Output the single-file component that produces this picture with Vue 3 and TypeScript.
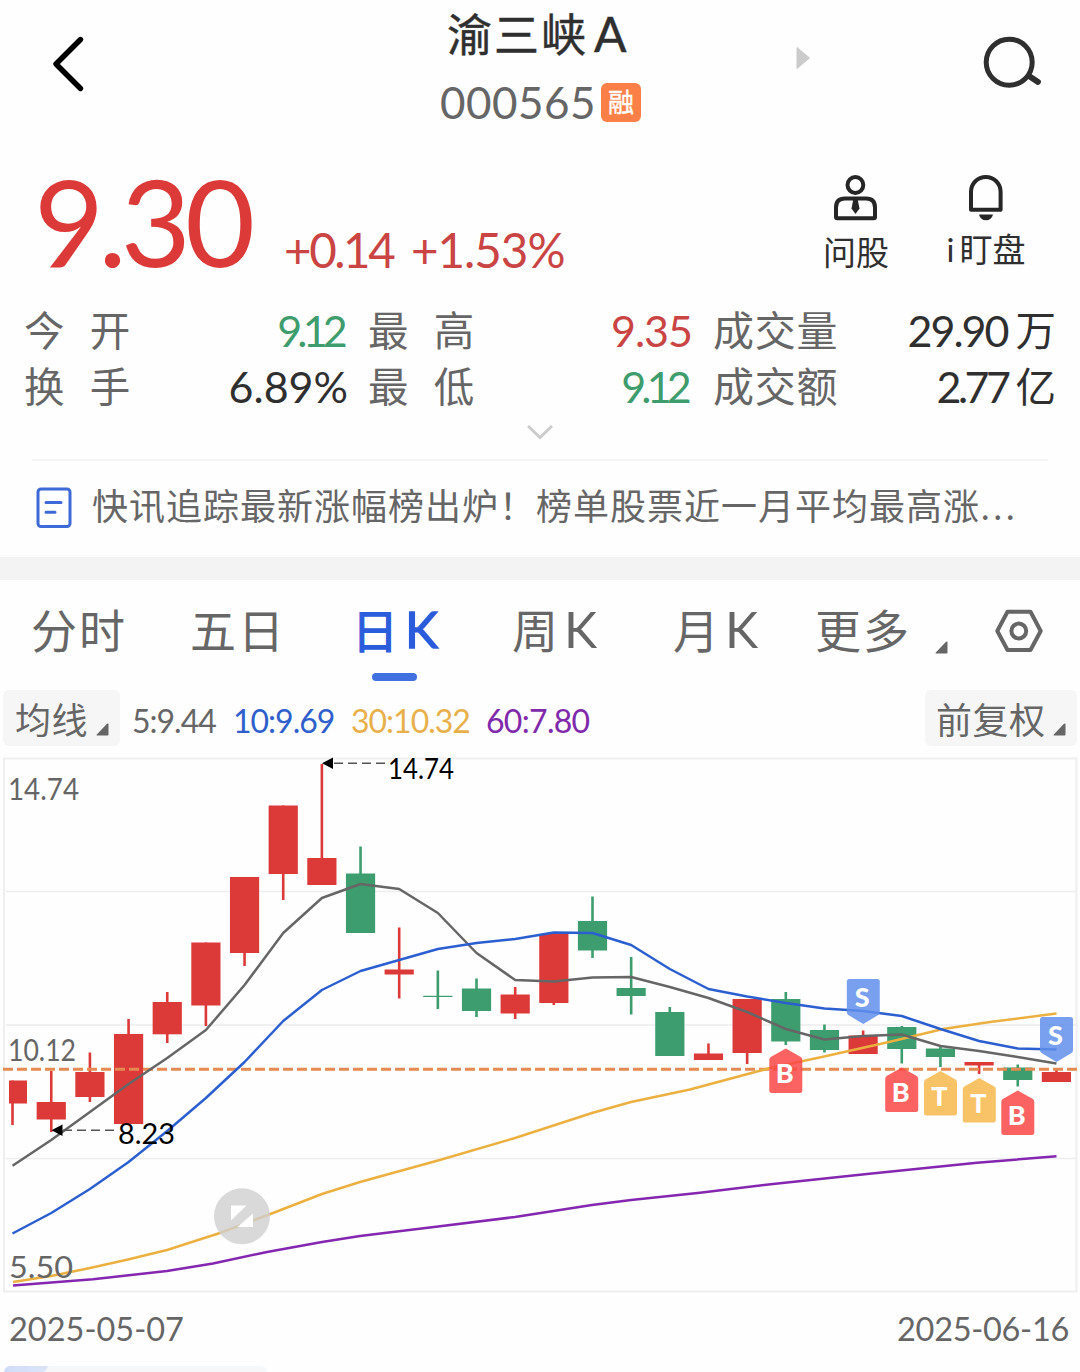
<script setup lang="ts">
type Candle = [up: boolean, high: number, top: number, bottom: number, low: number]
type Point = [number, number]

interface Marker {
  kind: 'B' | 'S' | 'T'
  x: number
  y: number
}

const candles: Candle[] = [
  [true, 1080.5, 1080.5, 1103.5, 1125],
  [true, 1071, 1102, 1119.5, 1132],
  [true, 1052.5, 1072, 1097, 1102],
  [true, 1019, 1034, 1124, 1124],
  [true, 992, 1002, 1034.3, 1043],
  [true, 942.5, 942.5, 1005.5, 1026],
  [true, 877, 877, 953, 966],
  [true, 805.5, 805.5, 874, 900],
  [true, 764, 858, 885, 885],
  [false, 846.5, 873.5, 933, 933],
  [true, 927.5, 969.5, 974.5, 998.5],
  [false, 970.5, 995.8, 997, 1009],
  [false, 978.5, 988.5, 1011, 1017],
  [true, 987, 994.5, 1013.5, 1019],
  [true, 934, 934, 1003, 1005],
  [false, 896.5, 921, 950.5, 958],
  [false, 957, 988, 996, 1014.5],
  [false, 1007, 1012, 1056, 1056],
  [true, 1043.5, 1053.5, 1060, 1060],
  [true, 999, 999, 1053, 1064],
  [false, 992, 999, 1041.5, 1045],
  [false, 1024.5, 1030, 1050, 1052.5],
  [true, 1030.5, 1035.5, 1054, 1054],
  [false, 1026, 1027, 1049, 1063.5],
  [false, 1046, 1048.5, 1057, 1067],
  [true, 1062, 1062, 1065.5, 1074],
  [false, 1064.5, 1067.5, 1080, 1086.5],
  [true, 1069, 1072, 1082, 1082],
]

const STEP = 38.66
const cx = (i: number): number => (i === 0 ? 12.5 : 12.6 + i * STEP)

const bodyLeft = (i: number): number => (i === 0 ? 9 : cx(i) - 14.6)
const bodyWidth = (i: number): number => (i === 0 ? 18 : 29.2)

const ma5 = [
  1165.7, 1140, 1112, 1084, 1058, 1030, 985, 933, 898, 884, 889, 913, 953, 980, 981.5, 977.5, 977, 987, 998, 1012,
  1029, 1039.5, 1036, 1034.5, 1046, 1051, 1057, 1063.5,
].map((y, i): Point => [cx(i), y])

const ma10 = [
  1233.5, 1213, 1189, 1162, 1131, 1098, 1062, 1021, 990, 971, 960, 949, 943, 939, 932.5, 933, 945, 969, 989, 996.5,
  1003, 1008.5, 1011, 1016, 1029, 1041, 1048.5, 1049.5,
].map((y, i): Point => [cx(i), y])

const ma30: Point[] = [
  [13, 1282], [51, 1276], [90, 1268], [128, 1259.5], [167, 1250], [220, 1233], [273, 1213], [322, 1194], [360, 1182],
  [438, 1160.5], [515, 1138], [592, 1113], [631, 1102], [690, 1089.5], [770, 1068], [823, 1056.7], [890, 1041.7],
  [943, 1029], [990, 1022], [1056.5, 1013.5],
]

const ma60: Point[] = [
  [13, 1285.6], [93, 1279.3], [167, 1271], [213, 1263.5], [267, 1252], [322, 1242], [360, 1236], [438, 1226.5],
  [515, 1217], [592, 1205], [631, 1200], [700, 1192.7], [773, 1184], [867, 1174], [977, 1162.7], [1056.5, 1156.3],
]

const toPoints = (pts: Point[]): string => pts.map((p) => p.join(',')).join(' ')

const averages = [
  { key: 'm60', points: toPoints(ma60), color: '#8426b0' },
  { key: 'm30', points: toPoints(ma30), color: '#ebb040' },
  { key: 'm5', points: toPoints(ma5), color: '#666666' },
  { key: 'm10', points: toPoints(ma10), color: '#2b5fd0' },
]

const markers: Marker[] = [
  { kind: 'B', x: 785.8, y: 1048 },
  { kind: 'S', x: 863.3, y: 979 },
  { kind: 'B', x: 901.7, y: 1067 },
  { kind: 'T', x: 940.5, y: 1070.5 },
  { kind: 'T', x: 979.3, y: 1077.5 },
  { kind: 'B', x: 1017.8, y: 1090 },
  { kind: 'S', x: 1056.5, y: 1017 },
]

const markerFill: Record<Marker['kind'], string> = { B: '#fa4646', S: '#628fec', T: '#f6b84b' }
const UP_TAG = 'M0 0.5 L15 9 Q16.5 10 16.5 12 V42.5 Q16.5 45 14 45 H-14 Q-16.5 45 -16.5 42.5 V12 Q-16.5 10 -15 9 Z'
const DOWN_TAG = 'M0 45 L15 36 Q16.5 35 16.5 33 V2.5 Q16.5 0 14 0 H-14 Q-16.5 0 -16.5 2.5 V33 Q-16.5 35 -15 36 Z'
</script>

<template>
  <div class="page">
    <header class="nav">
      <svg class="back" width="40" height="64" viewBox="48 32 40 64">
        <path d="M80.5 39.5 56 64 80.5 88.5" fill="none" stroke="#000" stroke-width="5.4" stroke-linecap="round" stroke-linejoin="round" />
      </svg>
      <div class="heading">
        <div class="name">渝三峡<span class="latin">A</span></div>
        <div class="code-row">
          <span class="code">000565</span>
          <span class="badge">融</span>
        </div>
      </div>
      <svg class="next" width="16" height="24" viewBox="0 0 16 24">
        <path d="M1 1.5 13.5 12 1 22.5Z" fill="#cbcbcb" stroke="#cbcbcb" stroke-linejoin="round" />
      </svg>
      <svg class="search" width="64" height="60" viewBox="980 33 64 60">
        <circle cx="1009.2" cy="62.2" r="23" fill="none" stroke="#2f2f2f" stroke-width="5" />
        <path d="M1029 76 1038 82" stroke="#2f2f2f" stroke-width="5.8" stroke-linecap="round" />
      </svg>
    </header>

    <section class="quote">
      <div class="price">9.30</div>
      <div class="change"><span class="diff">+0.14</span><span class="pct">+1.53%</span></div>
      <div class="actions">
        <div class="action ask">
          <svg width="48" height="48" viewBox="832 174 48 48" fill="none" stroke="#262626" stroke-width="4">
            <circle cx="855.4" cy="185" r="7.9" />
            <path d="M845 198.5H866Q875 198.5 875 207.500V217Q875 218.300 873.700 218.300H837.300Q836 218.300 836 217V207.500Q836 198.500 845 198.500Z" stroke-linejoin="round" />
            <path d="M853.300 199H857.600L859.500 208.500 855.500 214 851.500 208.500Z" fill="#262626" stroke="none" />
          </svg>
          <span>问股</span>
        </div>
        <div class="action watch">
          <svg width="40" height="48" viewBox="966 174 40 48" fill="none" stroke="#262626" stroke-width="4">
            <path d="M971 209.800V191.700A14.800 14.800 0 0 1 1000.600 191.700V209.800Z" stroke-linejoin="round" />
            <path d="M979 214.500H993Q991.500 220.300 986 220.300 980.500 220.300 979 214.500Z" fill="#262626" stroke="none" />
          </svg>
          <span>i<i class="gap"></i>盯盘</span>
        </div>
      </div>
    </section>

    <section class="stats">
      <div class="row">
        <span class="label wide">今 开</span><span class="val v1 green k912">9.12</span>
        <span class="label wide">最 高</span><span class="val v2 red k935">9.35</span>
        <span class="label">成交量</span><span class="val v3"><span class="num k2990">29.90</span><span class="unit">万</span></span>
      </div>
      <div class="row">
        <span class="label wide">换 手</span><span class="val v1 k689">6.89%</span>
        <span class="label wide">最 低</span><span class="val v2 green k912">9.12</span>
        <span class="label">成交额</span><span class="val v3"><span class="num k277">2.77</span><span class="unit">亿</span></span>
      </div>
      <svg class="chevron" width="28" height="16" viewBox="0 0 28 16">
        <path d="M2 2 14 13.500 26 2" fill="none" stroke="#cbcbcb" stroke-width="2.800" />
      </svg>
    </section>

    <section class="news">
      <svg width="36" height="42" viewBox="0 0 36 42" fill="none" stroke="#3d6ad6" stroke-width="3">
        <rect x="2" y="2" width="32" height="37.500" rx="3" />
        <path d="M10 15.500H25M10 25.300H19" stroke-width="3" stroke-linecap="round" />
      </svg>
      <span class="news-text">快讯追踪最新涨幅榜出炉！榜单股票近一月平均最高涨<span class="dots">...</span></span>
    </section>

    <div class="strip"></div>

    <nav class="tabs">
      <span class="tab t1">分时</span>
      <span class="tab t2">五日</span>
      <span class="tab t3 active">日<span class="latin">K</span></span>
      <span class="tab t4">周<span class="latin">K</span></span>
      <span class="tab t5">月<span class="latin">K</span></span>
      <span class="tab t6">更多</span>
      <svg class="tri" width="13" height="13" viewBox="0 0 13 13"><path d="M12.500 1V11.500Q12.500 12.500 11.500 12.500H1Q0 12.500 .8 11.500L11 .8Q12.500 0 12.500 1Z" fill="#666" /></svg>
      <svg class="gear" width="50" height="46" viewBox="994 608 50 46" fill="none" stroke="#666" stroke-width="4">
        <path d="M1007.500 611.800H1030.500L1040.700 631 1030.500 650H1007.500L997.300 631Z" stroke-linejoin="round" />
        <circle cx="1018.800" cy="631" r="7.400" />
      </svg>
    </nav>

    <section class="averages">
      <div class="chip left"><span>均线</span><svg width="13" height="13" viewBox="0 0 13 13"><path d="M12.500 1V11.500Q12.500 12.500 11.500 12.500H1Q0 12.500 .8 11.500L11 .8Q12.500 0 12.500 1Z" fill="#666" /></svg></div>
      <span class="ma a5">5:9.44</span>
      <span class="ma a10">10:9.69</span>
      <span class="ma a30">30:10.32</span>
      <span class="ma a60">60:7.80</span>
      <div class="chip right"><span>前复权</span><svg width="13" height="13" viewBox="0 0 13 13"><path d="M12.500 1V11.500Q12.500 12.500 11.500 12.500H1Q0 12.500 .8 11.500L11 .8Q12.500 0 12.500 1Z" fill="#666" /></svg></div>
    </section>

    <svg class="chart" width="1080" height="546" viewBox="0 750 1080 546">
      <g fill="none" stroke="#efeff0" stroke-width="2">
        <rect x="4" y="758.500" width="1072.500" height="533" />
        <path d="M6 891.500H1076M6 1025H1076M6 1158.500H1076" stroke="#ededee" stroke-width="1.600" />
      </g>

      <g v-for="(c, i) in candles" :key="i" :fill="c[0] ? '#db3a39' : '#3d9d6e'">
        <rect :x="cx(i) - 1.3" :y="c[1]" width="2.600" :height="c[4] - c[1]" />
        <rect :x="bodyLeft(i)" :y="c[2]" :width="bodyWidth(i)" :height="c[3] - c[2]" />
      </g>

      <path d="M3 1069.300H1077" stroke="#e58a52" stroke-width="3" stroke-dasharray="10 4" />

      <polyline v-for="a in averages" :key="a.key" :points="a.points" fill="none" :stroke="a.color" stroke-width="2.500" stroke-linejoin="round" />

      <g v-for="(m, i) in markers" :key="`m${i}`" :transform="`translate(${m.x} ${m.y})`">
        <path :d="m.kind === 'S' ? DOWN_TAG : UP_TAG" :fill="markerFill[m.kind]" opacity=".85" />
        <text class="tag" x="-1" :y="m.kind === 'S' ? 28 : 35" text-anchor="middle">{{ m.kind }}</text>
      </g>

      <g class="axis">
        <text x="8" y="800" textLength="71" lengthAdjust="spacingAndGlyphs">14.74</text>
        <text x="8" y="1061" textLength="68" lengthAdjust="spacingAndGlyphs">10.12</text>
        <text x="9" y="1278" textLength="64" lengthAdjust="spacingAndGlyphs">5.50</text>
      </g>

      <g stroke="#555" stroke-width="1.500" stroke-dasharray="9 5">
        <path d="M334 763.300H386" />
        <path d="M63 1130.300H119" />
      </g>
      <path d="M322 763.300 333 757.500V769ZM51.500 1130.300 62.500 1124.500V1136Z" fill="#000" />
      <g class="extreme">
        <text x="388" y="778.500" textLength="66" lengthAdjust="spacingAndGlyphs">14.74</text>
        <text x="118" y="1143.500" textLength="57" lengthAdjust="spacingAndGlyphs">8.23</text>
      </g>

      <circle cx="242" cy="1216.300" r="28" fill="#cfcfcf" opacity=".8" />
      <path d="M231 1205.500H246.500L231 1220.500ZM253 1213.500V1227H237.500Z" fill="#fff" />
    </svg>

    <footer class="dates">
      <span class="d1">2025-05-07</span>
      <span class="d2">2025-06-16</span>
    </footer>
    <div class="sheet"></div>
  </div>
</template>

<style>
body {
  margin: 0;
  background: #fefefe;
}
</style>

<style scoped>
.page {
  width: 1080px;
  height: 1372px;
  overflow: hidden;
  display: flex;
  flex-direction: column;
  background: #fefefe;
  color: #2f2f2f;
  font-family: Lato, 'Noto Sans CJK SC', sans-serif;
  white-space: nowrap;
}
.page > * {
  flex: none;
}
svg {
  display: block;
  flex: none;
}

.nav {
  display: flex;
  height: 150px;
  align-items: flex-start;
}
.back {
  margin: 32px 0 0 48px;
}
.heading {
  width: 240px;
  margin-left: 352px;
}
.name {
  height: 60px;
  line-height: 70px;
  padding-left: 7px;
  font-size: 45px;
  letter-spacing: 2px;
  -webkit-text-stroke: 0.5px currentColor;
}
.name .latin {
  font-size: 48px;
  line-height: 1;
  margin-left: 6px;
}
.code-row {
  display: flex;
  height: 84px;
  align-items: center;
}
.code {
  font-size: 44px;
  letter-spacing: 0.5px;
  color: #666;
  line-height: 52px;
  width: 161px;
}
.badge {
  width: 40px;
  height: 39px;
  border-radius: 6px;
  background: #fb8047;
  color: #fff;
  font-size: 26px;
  line-height: 38px;
  text-align: center;
  -webkit-text-stroke: 0.4px currentColor;
}
.next {
  margin: 46px 0 0 116px;
}
.search {
  margin: 33px 0 0 168px;
}

.quote {
  display: flex;
  height: 154px;
}
.price {
  width: 250px;
  padding-left: 34px;
  font-size: 121px;
  line-height: 142px;
  letter-spacing: -6px;
  color: #db3a39;
}
.change {
  display: flex;
  width: 540px;
  margin-top: 75px;
  font-size: 47.5px;
  line-height: 50px;
  color: #c94443;
}
.diff {
  width: 127px;
  letter-spacing: -2.4px;
}
.pct {
  letter-spacing: -1px;
}
.actions {
  display: flex;
  margin-top: 24px;
}
.action {
  display: flex;
  flex-direction: column;
  align-items: center;
  font-size: 33px;
}
.ask {
  width: 64px;
  line-height: 60px;
}
.watch {
  width: 82px;
  margin-left: 57px;
  line-height: 54px;
}
.gap {
  display: inline-block;
  width: 5px;
}

.stats {
  height: 155px;
}
.row {
  display: flex;
  height: 56px;
  line-height: 54px;
  font-size: 41px;
  padding-left: 24px;
}
.label {
  width: 124px;
  color: #666;
  letter-spacing: 0.7px;
}
.label.wide {
  width: 108px;
  word-spacing: 15px;
  letter-spacing: 0;
  font-size: 40.5px;
}
.val {
  font-size: 43px;
  text-align: right;
}
.v1 {
  width: 216px;
  margin-right: 20px;
}
.v2 {
  width: 216px;
  margin-right: 21px;
}
.v3 {
  display: flex;
  justify-content: flex-end;
  width: 219px;
}
.unit {
  font-size: 40.5px;
  margin-left: 8px;
}
.green {
  color: #3f9c6d;
}
.red {
  color: #c94443;
}
.k912 {
  box-sizing: border-box;
  padding-right: 5px;
  letter-spacing: -4.8px;
}
.k935 {
  letter-spacing: -1px;
}
.k2990 {
  letter-spacing: -2px;
}
.k277 {
  letter-spacing: -3.5px;
}
.chevron {
  margin: 8px auto 0 526px;
}

.news {
  display: flex;
  align-items: flex-start;
  width: 1016px;
  height: 98px;
  margin-left: 32px;
  border-top: 2px solid #f5f5f5;
  box-sizing: border-box;
}
.news svg {
  margin: 26px 20px 0 4px;
}
.news-text {
  font-size: 36px;
  line-height: 50px;
  letter-spacing: 1px;
  margin-top: 20px;
  color: #666;
}
.dots {
  letter-spacing: 4px;
  margin-left: 1px;
}

.strip {
  height: 23px;
  background: #f3f3f3;
}

.tabs {
  display: flex;
  height: 110px;
  color: #666;
  font-size: 46px;
  line-height: 102px;
}
.tab {
  letter-spacing: 2px;
}
.tab .latin {
  font-size: 50px;
  line-height: 1;
  margin-left: 4px;
}
.t1 {
  margin-left: 31px;
  width: 159px;
}
.t2 {
  width: 162px;
}
.t3 {
  width: 160px;
}
.t4 {
  width: 161px;
}
.t5 {
  width: 142px;
}
.t6 {
  width: 120px;
}
.active {
  position: relative;
  color: #2b5cdb;
  -webkit-text-stroke: 1.3px currentColor;
}
.active .latin {
  margin-left: 5px;
}
.active::after {
  content: '';
  position: absolute;
  left: 20px;
  top: 93px;
  width: 45px;
  height: 8px;
  border-radius: 4px;
  background: #4170e0;
}
.tri {
  margin-top: 61px;
}
.gear {
  margin: 28px 0 0 46px;
}

.averages {
  display: flex;
  height: 60px;
  line-height: 62px;
  font-size: 32px;
  letter-spacing: -1px;
}
.chip {
  display: flex;
  height: 56px;
  line-height: 60px;
  border-radius: 6px;
  background: #f6f6f6;
  box-sizing: border-box;
  font-size: 36px;
  letter-spacing: 0.5px;
  color: #666;
}
.chip svg {
  margin: 33px 0 0 auto;
}
.chip.left {
  width: 117px;
  margin-left: 3px;
  padding: 0 11px 0 12px;
}
.chip.right {
  width: 152px;
  margin-left: auto;
  margin-right: 3px;
  padding: 0 11px 0 11px;
}
.a5 {
  margin-left: 12px;
  width: 101px;
  color: #666;
}
.a10 {
  width: 118px;
  color: #2f5fcb;
}
.a30 {
  width: 135px;
  color: #e8b04a;
}
.a60 {
  color: #8029ab;
  letter-spacing: -0.7px;
}

.chart text {
  font-family: Lato, sans-serif;
}
.axis text {
  font-size: 31.5px;
  fill: #666;
}
.extreme text {
  font-size: 28px;
  fill: #000;
}
.chart .tag {
  font-size: 27px;
  font-weight: 900;
  fill: #fff;
}

.dates {
  display: flex;
  justify-content: space-between;
  height: 70px;
  line-height: 66px;
  padding: 0 11px 0 9px;
  font-size: 32.5px;
  color: #666;
}
.d2 {
  letter-spacing: -0.3px;
}
.sheet {
  width: 263px;
  height: 12px;
  margin-left: 4px;
  border-radius: 6px;
  background: linear-gradient(125deg, #cfdcf8 0, #dbe4f8 36px, #f6f7f9 37px);
}
</style>
